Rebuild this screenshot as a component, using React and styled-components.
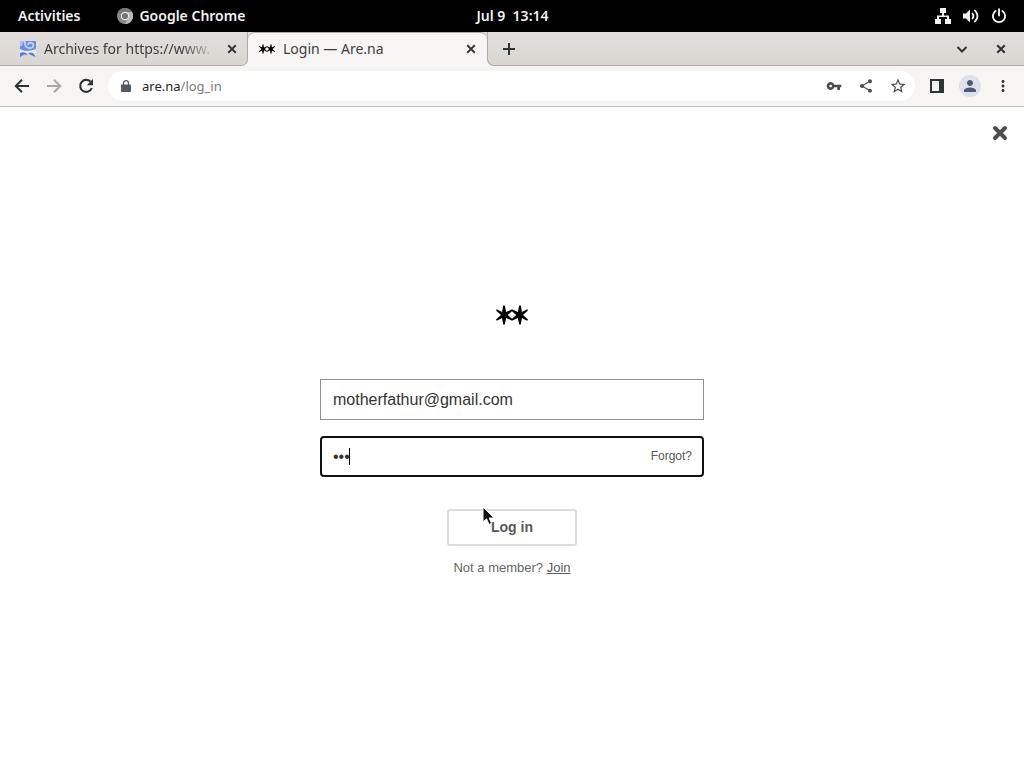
import React from 'react';
import styled, { createGlobalStyle } from 'styled-components';
import { MdVpnKey, MdShare, MdStarBorder, MdPerson, MdMoreVert } from 'react-icons/md';

const uiFont = '"Noto Sans", "Open Sans", sans-serif';
const pageFont = '"Liberation Sans", Arial, sans-serif';

const GlobalStyle = createGlobalStyle`
  *, *::before, *::after { box-sizing: border-box; }
  body { margin: 0; background: #fff; font-family: ${pageFont}; }
  button { font: inherit; color: inherit; background: none; border: 0; padding: 0; cursor: pointer; }
  svg { display: block; flex: none; }
`;

const Screen = styled.div`
  min-height: 100vh;
  display: flex;
  flex-direction: column;
`;

/* Desktop panel */

const TopBar = styled.header`
  display: grid;
  grid-template-columns: 1fr auto 1fr;
  align-items: center;
  height: 32px;
  padding: 0 17px 0 18px;
  background: #000;
  color: #f2f2f2;
  font: 600 14px/20px ${uiFont};
`;

const PanelGroup = styled.div`
  display: flex;
  align-items: center;
  gap: ${({ $gap }) => $gap}px;
  justify-content: ${({ $end }) => ($end ? 'flex-end' : 'flex-start')};
`;

const PanelButton = styled.button`
  display: flex;
  align-items: center;
  gap: 6px;
`;

const Clock = styled.time`
  white-space: pre;
`;

/* Browser tabs */

const TabStrip = styled.div`
  display: flex;
  height: 34px;
  background: linear-gradient(#e0dcd8 50%, #f6f5f4 50%);
  font: 14px/20px ${uiFont};
  color: #3d3d3d;
`;

const Tab = styled.div`
  display: flex;
  align-items: center;
  gap: 8px;
  min-width: 0;
  flex: 0 1 ${({ $active }) => ($active ? 239 : 248)}px;
  padding: ${({ $active }) => ($active ? '0 8px 1px 11px' : '1px 7px 0 20px')};
  border: solid #aeaaa6;
  border-width: ${({ $active }) => ($active ? '1px 0 0 0' : '0 1px 1px 0')};
  border-radius: ${({ $active }) => ($active ? '7px 7px 0 0' : '0 0 7px 0')};
  background: ${({ $active }) => ($active ? '#f6f5f4' : 'linear-gradient(#e2dedb, #dad6d2)')};
`;

const TabTitle = styled.span`
  flex: 1;
  min-width: 0;
  white-space: nowrap;
  mask-image: ${({ $fade }) => ($fade ? 'linear-gradient(to right, #000 80%, transparent)' : 'none')};
`;

const IconButton = styled.button`
  display: flex;
  align-items: center;
  justify-content: center;
  width: ${({ $size = 16 }) => $size}px;
  height: ${({ $size = 16 }) => $size}px;
  flex: none;
  border-radius: 50%;
  color: ${({ $tone = '#2e3436' }) => $tone};
  background: ${({ $fill = 'transparent' }) => $fill};
`;

const StripRest = styled.div`
  flex: 1;
  display: flex;
  align-items: center;
  gap: 23px;
  padding: 0 15px 0 13px;
  border: solid #aeaaa6;
  border-width: 0 0 1px 1px;
  border-radius: 0 0 0 7px;
  background: linear-gradient(#e2dedb, #dad6d2);
`;

const Spacer = styled.div`
  flex: 1;
`;

/* Address bar */

const Toolbar = styled.nav`
  display: flex;
  align-items: center;
  gap: 12px;
  height: 41px;
  padding: 0 11px 0 12px;
  background: #f6f5f4;
  border-bottom: 1px solid #c3c1bf;
`;

const AddressBar = styled.div`
  flex: 1;
  display: flex;
  align-items: center;
  gap: 12px;
  height: 30px;
  padding: 0 7px 0 8px;
  border-radius: 15px;
  background: #fff;
`;

const Address = styled.span`
  flex: 1;
  margin-left: -6px;
  font: 13px/18px ${uiFont};
  color: #7b7b7b;
`;

const Host = styled.span`
  color: #1f1f1f;
`;

/* Login page */

const Page = styled.main`
  position: relative;
  flex: 1;
  display: flex;
  flex-direction: column;
  align-items: center;
  justify-content: center;
  padding: 6px 16px 0;
  background: #fff;
`;

const ClosePage = styled.button`
  position: absolute;
  top: 18px;
  right: 16px;
  color: #4d4d4d;
`;

const Form = styled.form`
  width: 100%;
  max-width: 384px;
  margin-top: 54px;
  display: flex;
  flex-direction: column;
  align-items: center;
  gap: 16px;
`;

const Field = styled.div`
  position: relative;
  width: 100%;
  height: 41px;
  display: flex;
  align-items: center;
  border: ${({ $focused }) => ($focused ? '2px solid #101010' : '1px solid #8f8f8f')};
  border-radius: ${({ $focused }) => ($focused ? 4 : 0)}px;
  padding: 0 ${({ $focused }) => ($focused ? 10 : 12)}px 0 ${({ $focused }) => ($focused ? 11 : 12)}px;
`;

const Input = styled.input`
  flex: 1;
  min-width: 0;
  padding: 0;
  border: 0;
  outline: 0;
  background: transparent;
  font: 16px/20px ${pageFont};
  color: #333;
`;

const Caret = styled.span`
  position: absolute;
  left: 27px;
  top: 10px;
  width: 1px;
  height: 17px;
  background: #000;
`;

const Forgot = styled.a`
  padding-bottom: 2px;
  font-size: 12px;
  line-height: 16px;
  color: #585858;
  text-decoration: none;
`;

const Submit = styled.button`
  position: relative;
  width: 130px;
  height: 37px;
  margin-top: 16px;
  padding-bottom: 2px;
  border: 2px solid #dcdcdc;
  border-radius: 3px;
  color: #585858;
  font-size: 14px;
  font-weight: 700;
`;

const Pointer = styled.svg`
  position: absolute;
  left: 33px;
  top: -5px;
`;

const JoinLine = styled.p`
  margin: 14px 0 0;
  font-size: 13px;
  line-height: 16px;
  color: #666;
`;

const JoinLink = styled.a`
  color: #585858;
`;

function Cross({ size, width, cap = 'butt' }) {
  return (
    <svg width={size} height={size} viewBox="0 0 16 16" stroke="currentColor" strokeWidth={width} strokeLinecap={cap}>
      <path d="M3 3 13 13M13 3 3 13" />
    </svg>
  );
}

function Arrow({ forward }) {
  return (
    <svg width="16" height="16" viewBox="0 0 16 16" fill="none" stroke="currentColor" strokeWidth="2">
      <path d={forward ? 'M1 8H14M8 1.8 14.2 8 8 14.2' : 'M15 8H2M8 1.8 1.8 8 8 14.2'} />
    </svg>
  );
}

function ReloadIcon() {
  return (
    <svg width="16" height="16" viewBox="0 0 16 16">
      <path d="M12.4 3.6A6 6 0 1 0 13.8 10" fill="none" stroke="currentColor" strokeWidth="2.1" />
      <path d="M15 1V7.2H8.8Z" fill="currentColor" />
    </svg>
  );
}

function Stars({ width, height }) {
  return (
    <svg width={width} height={height} viewBox="0 0 32 20" fill="#000" aria-label="Are.na">
      <path
        d="M7.2.6 8.8.6 10.1 7 15.6 4.6H16.4L21.9 7 23.2.6 24.8.6 25.9 7 31.2 4.2 32 5.6 27 10 32 14.4 31.2 15.8 25.9 13 24.8 19.4 23.2 19.4 21.9 13 16.4 15.4H15.6L10.1 13 8.8 19.4 7.2 19.4 6.1 13 .8 15.8 0 14.4 5 10 0 5.6.8 4.2 6.1 7ZM16 6.2 11.8 10 16 13.8 20.2 10Z"
        fillRule="evenodd"
      />
    </svg>
  );
}

function ChromeIcon() {
  return (
    <svg width="16" height="16" viewBox="0 0 16 16">
      <circle cx="8" cy="8" r="8" fill="#8b8b8b" />
      <path d="M8 8 1 4A8 8 0 0 1 15 4L8 4Z" fill="#777" />
      <path d="M8 4H15A8 8 0 0 1 8 16L11.5 10Z" fill="#b9b9b9" />
      <circle cx="8" cy="8" r="4.2" fill="#eee" />
      <circle cx="8" cy="8" r="3.1" fill="#777" />
    </svg>
  );
}

function ArchiveIcon() {
  return (
    <svg width="16" height="16" viewBox="0 0 16 16">
      <path d="M0 0H16V10H0Z" fill="#6b8be0" />
      <path d="M5 0C4 5 7 8 11 7C14 6 14 3 12 2C10 1 8 2 8 4" fill="none" stroke="#c5d3f8" strokeWidth="1.8" />
      <path d="M0 8C5 11 11 10 16 8V12H0Z" fill="#e8edfb" />
      <path d="M0 12C4 10.5 6 11.5 7.5 14L4 13.5 0 16ZM8 12C12 10.5 14 12 15.5 16L11 14Z" fill="#5778d4" />
      <path d="M0 0H4L2 5H0Z" fill="#a9bff3" />
    </svg>
  );
}

function LockIcon() {
  return (
    <svg width="10" height="12" viewBox="0 0 10 12">
      <path d="M1 4.5H9A1 1 0 0 1 10 5.5V11A1 1 0 0 1 9 12H1A1 1 0 0 1 0 11V5.5A1 1 0 0 1 1 4.5Z" fill="currentColor" />
      <path d="M2.5 5V3.2A2.5 2.5 0 0 1 7.5 3.2V5" fill="none" stroke="currentColor" strokeWidth="1.3" />
    </svg>
  );
}

function NetworkIcon() {
  return (
    <svg width="16" height="16" viewBox="0 0 16 16" fill="#f2f2f2">
      <path d="M5 0H11V5H9V7.5H14V11H16V16H10V11H12V9H4V11H6V16H0V11H2V7.5H7V5H5Z" />
    </svg>
  );
}

function VolumeIcon() {
  return (
    <svg width="16" height="16" viewBox="0 0 16 16" fill="none" stroke="#f2f2f2" strokeLinecap="round">
      <path d="M0 5.5H3L7 1.5V14.5L3 10.5H0Z" fill="#f2f2f2" stroke="none" />
      <path d="M9.5 5.5Q11.5 8 9.5 10.5" strokeWidth="1.8" />
      <path d="M12 2.5Q17 8 12 13.5" strokeWidth="1.8" />
    </svg>
  );
}

function PowerIcon() {
  return (
    <svg width="16" height="16" viewBox="0 0 16 16" fill="none" stroke="#f2f2f2" strokeWidth="1.9" strokeLinecap="round">
      <path d="M8 1.2V7.5M4.6 3A6.1 6.1 0 1 0 11.4 3" />
    </svg>
  );
}

export default function App() {
  return (
    <Screen>
      <GlobalStyle />
      <TopBar>
        <PanelGroup $gap={37}>
          <PanelButton>Activities</PanelButton>
          <PanelButton>
            <ChromeIcon />
            Google Chrome
          </PanelButton>
        </PanelGroup>
        <Clock>{'Jul 9  13:14'}</Clock>
        <PanelGroup $gap={12} $end>
          <NetworkIcon />
          <VolumeIcon />
          <PowerIcon />
        </PanelGroup>
      </TopBar>

      <TabStrip>
        <Tab>
          <ArchiveIcon />
          <TabTitle $fade>Archives for https://www.</TabTitle>
          <IconButton aria-label="Close tab"><Cross size={12} width={2.4} /></IconButton>
        </Tab>
        <Tab $active>
          <Stars width={16} height={10} />
          <TabTitle>Login — Are.na</TabTitle>
          <IconButton aria-label="Close tab"><Cross size={12} width={2.4} /></IconButton>
        </Tab>
        <StripRest>
          <IconButton aria-label="New tab">
            <svg width="12" height="12" viewBox="0 0 12 12" stroke="currentColor" strokeWidth="2"><path d="M6 0V12M0 6H12" /></svg>
          </IconButton>
          <Spacer />
          <IconButton aria-label="Search tabs">
            <svg width="12" height="12" viewBox="0 0 12 12" fill="none" stroke="currentColor" strokeWidth="2"><path d="M1.5 4 6 8.5 10.5 4" /></svg>
          </IconButton>
          <IconButton aria-label="Close window"><Cross size={12} width={2.8} /></IconButton>
        </StripRest>
      </TabStrip>

      <Toolbar>
        <IconButton $size={20} aria-label="Back"><Arrow /></IconButton>
        <IconButton $size={20} $tone="#a8a8a8" aria-label="Forward"><Arrow forward /></IconButton>
        <IconButton $size={20} aria-label="Reload"><ReloadIcon /></IconButton>
        <AddressBar>
          <IconButton $size={20} $tone="#55585d" aria-label="Site information"><LockIcon /></IconButton>
          <Address><Host>are.na</Host>/log_in</Address>
          <IconButton $size={20} $tone="#4a4d51" aria-label="Passwords"><MdVpnKey size={16} /></IconButton>
          <IconButton $size={20} $tone="#4a4d51" aria-label="Share"><MdShare size={16} /></IconButton>
          <IconButton $size={20} $tone="#4a4d51" aria-label="Bookmark"><MdStarBorder size={18} /></IconButton>
        </AddressBar>
        <IconButton $size={20} aria-label="Side panel">
          <svg width="14" height="14" viewBox="0 0 14 14"><path d="M1 1H13V13H1Z" fill="none" stroke="currentColor" strokeWidth="2" /><path d="M9 0H14V14H9Z" fill="currentColor" /></svg>
        </IconButton>
        <IconButton $size={22} $tone="#4f5a70" $fill="#dce1ea" aria-label="Profile"><MdPerson size={18} /></IconButton>
        <IconButton $size={20} aria-label="Menu"><MdMoreVert size={18} /></IconButton>
      </Toolbar>

      <Page>
        <ClosePage aria-label="Close"><Cross size={16} width={4} cap="round" /></ClosePage>
        <Stars width={32} height={20} />
        <Form onSubmit={(event) => event.preventDefault()}>
          <Field>
            <Input type="email" aria-label="Email" defaultValue="motherfathur@gmail.com" />
          </Field>
          <Field $focused>
            <Input type="password" aria-label="Password" defaultValue="abc" />
            <Caret />
            <Forgot href="#forgot">Forgot?</Forgot>
          </Field>
          <Submit type="submit">
            Log in
            <Pointer width="14" height="20" viewBox="0 0 14 20">
              <path d="M1 1V16L4.6 12.8 7 18.5 9.5 17.4 7.2 12H12Z" fill="#111" stroke="#fff" strokeWidth="1" />
            </Pointer>
          </Submit>
        </Form>
        <JoinLine>Not a member? <JoinLink href="#join">Join</JoinLink></JoinLine>
      </Page>
    </Screen>
  );
}
